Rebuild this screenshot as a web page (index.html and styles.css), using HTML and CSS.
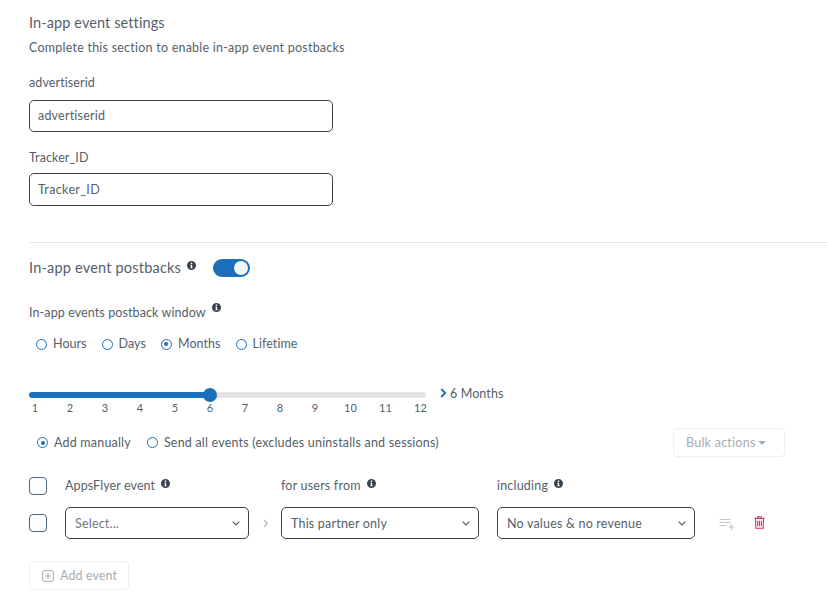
FILE: index.html
```html
<!DOCTYPE html>
<html lang="en">
<head>
<meta charset="utf-8">
<title>In-app event settings</title>
<link rel="stylesheet" href="styles.css">
</head>
<body>
<main class="page">
  <section class="settings">
    <h2 class="title">In-app event settings</h2>
    <p class="subtitle">Complete this section to enable in-app event postbacks</p>
    <label class="field-label">advertiserid</label>
    <div class="input">advertiserid</div>
    <label class="field-label second">Tracker_ID</label>
    <div class="input">Tracker_ID</div>
  </section>
  <hr class="divider">
  <div class="postbacks-head">
    <h2 class="title wide-title">In-app event postbacks</h2>
    <svg class="info info-up" viewBox="0 0 10 10"><use href="#i"/></svg>
    <span class="toggle"><span class="knob"></span></span>
  </div>
  <div class="window-label">
    <span>In-app events postback window</span>
    <svg class="info info-high" viewBox="0 0 10 10"><use href="#i"/></svg>
  </div>
  <div class="radios period">
    <span class="radio"><i class="dot"></i>Hours</span>
    <span class="radio"><i class="dot"></i>Days</span>
    <span class="radio"><i class="dot on"></i>Months</span>
    <span class="radio"><i class="dot"></i>Lifetime</span>
  </div>
  <div class="slider-row">
    <div class="slider">
      <div class="track"><div class="fill"></div><div class="thumb"></div></div>
      <div class="ticks">
        <span>1</span><span>2</span><span>3</span><span>4</span><span>5</span><span>6</span><span>7</span><span>8</span><span>9</span><span>10</span><span>11</span><span>12</span>
      </div>
    </div>
    <div class="slider-value">
      <svg class="chev-blue" viewBox="0 0 7 10"><path d="M1.2 1l4 4-4 4" fill="none" stroke="#1b6fbb" stroke-width="1.8"/></svg>
      <span>6 Months</span>
    </div>
  </div>
  <div class="mode-row">
    <div class="radios">
      <span class="radio"><i class="dot on"></i>Add manually</span>
      <span class="radio"><i class="dot"></i>Send all events (excludes uninstalls and sessions)</span>
    </div>
    <div class="bulk">Bulk actions<i class="caret"></i></div>
  </div>
  <div class="grid">
    <span class="check"></span>
    <div class="col-head"><span>AppsFlyer event</span><svg class="info" viewBox="0 0 10 10"><use href="#i"/></svg></div>
    <span></span>
    <div class="col-head spaced"><span>for users from</span><svg class="info" viewBox="0 0 10 10"><use href="#i"/></svg></div>
    <div class="col-head spaced last-col"><span>including</span><svg class="info" viewBox="0 0 10 10"><use href="#i"/></svg></div>
    <span></span>

    <span class="check"></span>
    <div class="select placeholder">Select...<svg class="chev" viewBox="0 0 8 5"><path d="M.7.7L4 4l3.3-3.3" fill="none" stroke="#4a5560" stroke-width="1.1"/></svg></div>
    <svg class="arrow" viewBox="0 0 6 9"><path d="M1 1l3.5 3.5L1 8" fill="none" stroke="#b4b8bc" stroke-width="1.2"/></svg>
    <div class="select">This partner only<svg class="chev" viewBox="0 0 8 5"><path d="M.7.7L4 4l3.3-3.3" fill="none" stroke="#4a5560" stroke-width="1.1"/></svg></div>
    <div class="select last-col">No values &amp; no revenue<svg class="chev" viewBox="0 0 8 5"><path d="M.7.7L4 4l3.3-3.3" fill="none" stroke="#4a5560" stroke-width="1.1"/></svg></div>
    <div class="actions">
      <svg class="list-add" viewBox="0 0 16 12"><path d="M0 1.5h11M0 4.5h11M0 7.5h7M12 6v6M9 9h6" fill="none" stroke="#c4c6c8" stroke-width="1.2"/></svg>
      <svg class="trash" viewBox="0 0 12 14"><path d="M4 2V.8h4V2M.5 2.5h11M1.6 2.5l.4 10.7h8l.4-10.7M4 5v6M6 5v6M8 5v6" fill="none" stroke="#e0315f" stroke-width="1.2"/></svg>
    </div>
  </div>
  <div class="add-event">
    <svg class="plus-box" viewBox="0 0 12 12"><rect x=".6" y=".6" width="10.8" height="10.8" rx="1.5" fill="none" stroke="#a9adb1"/><path d="M6 3v6M3 6h6" stroke="#a9adb1"/></svg>
    <span>Add event</span>
  </div>
</main>
<svg class="defs" width="0" height="0">
  <symbol id="i" viewBox="0 0 10 10">
    <path fill-rule="evenodd" fill="#38434e" d="M5 0a5 5 0 1 1 0 10A5 5 0 0 1 5 0zM4.2 1.8v1.5h1.6V1.8zM3.6 4.2V5h.7v2.2h-.7V8h2.8v-.8h-.7V4.2z"/>
  </symbol>
</svg>
</body>
</html>
```
FILE: styles.css
```css
* { box-sizing: border-box; }
html, body { margin: 0; background: #fff; }
body {
  font-family: "Lato", "Noto Sans", sans-serif;
  color: #555f6a;
  font-size: 12.5px;
  overflow: hidden;
}
.page { width: 827px; height: 606px; padding: 14px 0 0 29px; overflow: hidden; }
.defs { position: absolute; }
.title { margin: 0; font-size: 14.5px; line-height: 18px; font-weight: 400; color: #555f6a; letter-spacing: .1px; }
.wide-title { letter-spacing: .2px; }
.subtitle { margin: 8px 0 0; font-size: 12.5px; line-height: 16px; letter-spacing: .23px; }
.field-label { display: block; margin-top: 19px; line-height: 16px; font-size: 12.5px; letter-spacing: .1px; }
.field-label.second { margin-top: 18px; }
.input {
  width: 304px; height: 32px; margin-top: 9px;
  border: 1px solid #38434e; border-radius: 5px;
  padding: 0 8px; line-height: 30px; font-size: 12.5px; letter-spacing: .2px;
}
.field-label.second + .input { height: 33px; margin-top: 7px; line-height: 31px; letter-spacing: .35px; }
.divider { margin: 36px 0 0; border: 0; border-top: 1px solid #e4e6e8; }
.postbacks-head { display: flex; align-items: center; height: 18px; margin-top: 16px; }
.info { width: 9px; height: 9px; margin-left: 6px; flex: none; }
.info-up { position: relative; top: -3px; }
.info-high { position: relative; top: -5px; }
.toggle {
  width: 37px; height: 18px; margin-left: 17px; padding: 2px 2px 2px 21px;
  border-radius: 9px; background: #1b6fbb; display: block;
}
.knob { display: block; width: 14px; height: 14px; border-radius: 50%; background: #f2f5f8; }
.window-label { display: flex; align-items: center; height: 16px; margin-top: 27px; letter-spacing: .1px; }
.radios { display: flex; gap: 15px; }
.radios.period { margin: 16px 0 0 7px; height: 16px; gap: 15px; letter-spacing: 0; }
.radio { display: flex; align-items: center; line-height: 16px; letter-spacing: .05px; }
.mode-row .radio { letter-spacing: .2px; }
.dot {
  width: 11px; height: 11px; margin-right: 6px; border: 1.8px solid #1b6fbb; border-radius: 50%;
  display: flex; align-items: center; justify-content: center; flex: none;
}
.dot.on::after { content: ""; width: 4px; height: 4px; border-radius: 50%; background: #1b6fbb; }
.slider-row { display: flex; margin-top: 40px; }
.slider { width: 397px; }
.track { position: relative; height: 6px; border-radius: 3px; background: #e4e4e4; }
.fill { width: 181px; height: 6px; border-radius: 3px; background: #1b6fbb; }
.thumb { position: absolute; left: 174px; top: -4px; width: 14px; height: 14px; border-radius: 50%; background: #1b6fbb; }
.ticks { display: flex; justify-content: space-between; margin-top: 3px; padding: 0 0 0 3px; font-size: 11px; line-height: 14px; }
.ticks span { width: 12px; text-align: center; margin-left: -3px; }
.slider-value { display: flex; align-items: center; height: 16px; margin: -7px 0 0 14px; letter-spacing: .1px; }
.chev-blue { width: 7px; height: 10px; margin-right: 3px; }
.mode-row { display: flex; align-items: center; justify-content: space-between; width: 756px; margin-top: 13px; height: 29px; }
.mode-row .radios { padding-left: 8px; gap: 16px; }
.bulk {
  width: 112px; height: 29px; border: 1px solid #eceeef; border-radius: 4px; padding-left: 12px;
  color: #a9adb1; display: flex; align-items: center; letter-spacing: .25px;
}
.caret { width: 0; height: 0; margin-left: 2px; border: 4px solid transparent; border-top: 4px solid #a9adb1; border-bottom: 0; }
.grid {
  display: grid;
  grid-template-columns: 36px 184px 32px 198px 216px 90px;
  grid-template-rows: 18px 32px;
  row-gap: 12px;
  margin-top: 20px;
  align-items: center;
}
.last-col { margin-left: 18px; }
.check { width: 18px; height: 18px; border: 1.6px solid #51657a; border-radius: 4px; display: block; }
.col-head { display: flex; align-items: center; letter-spacing: .1px; position: relative; top: -1px; }
.col-head.spaced { letter-spacing: .2px; }
.col-head .info { position: relative; top: -2px; }
.select {
  height: 32px; border: 1px solid #38434e; border-radius: 5px; padding: 0 8px 0 9px;
  display: flex; align-items: center; justify-content: space-between; letter-spacing: .2px;
}
.placeholder { color: #6f777f; }
.chev { width: 8px; height: 5px; }
.arrow { width: 6px; height: 9px; margin-left: 14px; }
.actions { display: flex; align-items: center; margin-left: 24px; }
.list-add { width: 17px; height: 12px; margin-top: 2px; }
.trash { width: 11px; height: 13px; margin-left: 18px; margin-top: -2px; }
.add-event {
  width: 100px; height: 29px; margin-top: 22px; border: 1px solid #eceeef; border-radius: 4px;
  color: #a9adb1; display: flex; align-items: center; padding-left: 12px; letter-spacing: .1px;
}
.plus-box { width: 12px; height: 12px; margin-right: 6px; }
```
